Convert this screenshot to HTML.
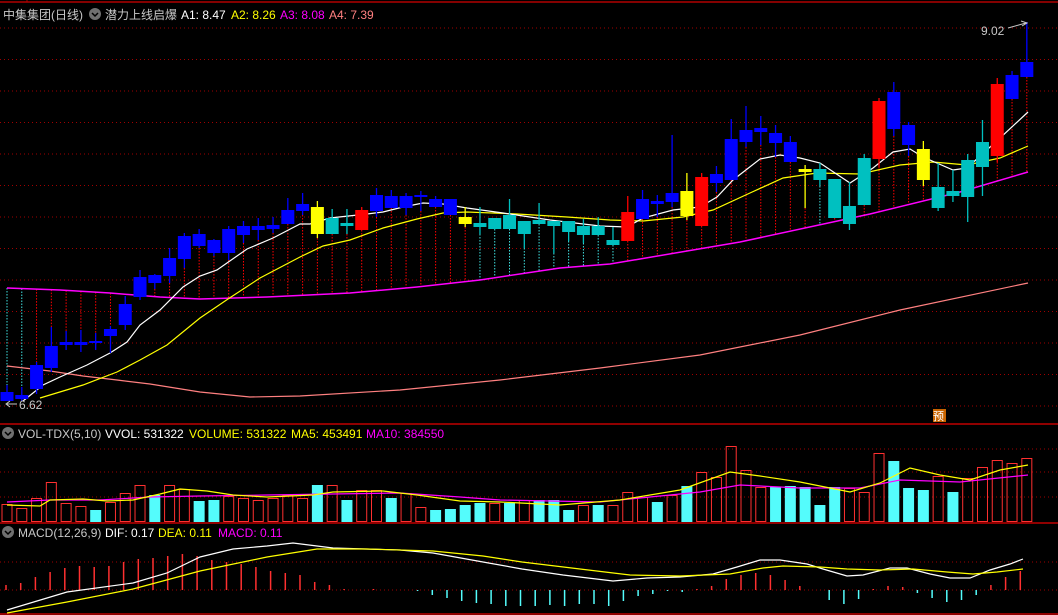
<!DOCTYPE html>
<html><head><meta charset="utf-8"><style>
html,body{margin:0;padding:0;background:#000;width:1058px;height:615px;overflow:hidden}
svg{display:block}
text{font-family:"Liberation Sans","Noto Sans CJK SC",sans-serif;font-size:12px}
</style></head><body>
<svg id="s" width="1058" height="615" viewBox="0 0 1058 615" xmlns="http://www.w3.org/2000/svg">
<rect width="1058" height="615" fill="#000"/>
<line x1="0" y1="2" x2="1058" y2="2" stroke="#b00000" stroke-width="1.5"/>
<line x1="27" y1="0" x2="27" y2="2" stroke="#b00000"/>
<g id="grid"></g>
<g id="main"></g>
<line x1="0" y1="424" x2="1058" y2="424" stroke="#c00000" stroke-width="1.5"/>
<line x1="0" y1="523" x2="1058" y2="523" stroke="#c00000" stroke-width="1.5"/>
<line x1="0" y1="614" x2="1058" y2="614" stroke="#c00000" stroke-width="1.5"/>
<g id="vol"></g>
<g id="macd"></g>
<circle cx="95" cy="14" r="6" fill="#707070"/><path d="M92 13 L95 16 L98 13" stroke="#000" stroke-width="1.5" fill="none"/>
<text x="3" y="19" fill="#c8c8c8">中集集团(日线)</text>
<text x="105" y="19" fill="#c8c8c8">潜力上线启爆</text>
<text x="181" y="19" fill="#ffffff">A1: 8.47</text>
<text x="231" y="19" fill="#ffff00">A2: 8.26</text>
<text x="280" y="19" fill="#ff00ff">A3: 8.08</text>
<text x="329" y="19" fill="#ff8080">A4: 7.39</text>
<circle cx="8" cy="433" r="6" fill="#707070"/><path d="M5 432 L8 435 L11 432" stroke="#000" stroke-width="1.5" fill="none"/>
<text x="18" y="438" fill="#c8c8c8">VOL-TDX(5,10)</text>
<text x="105" y="438" fill="#ffffff">VVOL: 531322</text>
<text x="189" y="438" fill="#ffff00">VOLUME: 531322</text>
<text x="291" y="438" fill="#ffff00">MA5: 453491</text>
<text x="366" y="438" fill="#ff00ff">MA10: 384550</text>
<circle cx="8" cy="532" r="6" fill="#707070"/><path d="M5 531 L8 534 L11 531" stroke="#000" stroke-width="1.5" fill="none"/>
<text x="18" y="537" fill="#c8c8c8">MACD(12,26,9)</text>
<text x="105" y="537" fill="#ffffff">DIF: 0.17</text>
<text x="158" y="537" fill="#ffff00">DEA: 0.11</text>
<text x="218" y="537" fill="#ff00ff">MACD: 0.11</text>
<text x="981" y="35" fill="#c8c8c8">9.02</text>
<path d="M1008 28 L1026 23 M1021 21 L1027 23 L1022 26" stroke="#c8c8c8" fill="none"/>
<path d="M7 404 L17 404 M10 401 L6 404 L10 407" stroke="#c8c8c8" fill="none"/>
<text x="19" y="409" fill="#c8c8c8">6.62</text>
<rect x="933" y="409" width="13" height="13" fill="#c86400"/>
<text x="933" y="420" fill="#ffffff" style="font-size:11px">预</text>
</svg>
<script>
var NS="http://www.w3.org/2000/svg";
function el(p,t,a){var e=document.createElementNS(NS,t);for(var k in a)e.setAttribute(k,a[k]);document.getElementById(p).appendChild(e);return e;}
function X(i){return 7+14.78*i;}
function poly(p,pts,c,w){el(p,"polyline",{points:pts.map(function(q){return q.join(",")}).join(" "),fill:"none",stroke:c,"stroke-width":w||1.2});}
function interp(pts,x){for(var i=0;i<pts.length-1;i++){if(x>=pts[i][0]&&x<=pts[i+1][0]){var t=(x-pts[i][0])/(pts[i+1][0]-pts[i][0]);return pts[i][1]+t*(pts[i+1][1]-pts[i][1]);}}return x<pts[0][0]?pts[0][1]:pts[pts.length-1][1];}
[28,59.5,91,122.5,154,185.5,217,248.5,280,311.5,343,374.5,406,449,472,497,562,590].forEach(function(y){el("grid","line",{x1:0,x2:1058,y1:y,y2:y,stroke:"#a00000","stroke-dasharray":"1 3"});});
var mag=[[7,288],[60,290],[110,293],[160,297],[200,299],[267,297],[350,293],[417,287],[480,280],[560,268],[610,264],[640,259],[740,242],[870,214],[960,192],[1028,172]];
var C={B:"#0000ff",R:"#ff0000",C:"#00c0c0",Y:"#ffff00"};
var cd=[[392,401,385,401,"B"],[395,399,387,401,"B"],[365,389,362,394,"B"],[346,368,327,372,"B"],[342,345,331,350,"B"],[342,345,330,352,"B"],[341,343,333,350,"B"],[329,336,326,353,"B"],[304,325,296,330,"B"],[277,297,270,300,"B"],[275,283,274,289,"B"],[258,276,248,283,"B"],[236,259,233,268,"B"],[234,246,229,248,"B"],[240,253,239,256,"B"],[229,253,226,260,"B"],[226,235,221,243,"B"],[226,230,218,240,"B"],[225,229,217,233,"B"],[210,224,198,224,"B"],[204,211,193,215,"B"],[207,234,201,238,"Y"],[218,234,209,234,"C"],[223,226,209,234,"C"],[210,230,207,230,"R"],[195,211,188,217,"B"],[196,208,190,208,"B"],[196,208,193,215,"B"],[195,197,191,211,"B"],[199,207,196,207,"B"],[199,215,199,215,"B"],[217,224,207,227,"Y"],[223,227,207,234,"C"],[218,229,218,229,"C"],[215,229,199,229,"C"],[221,234,221,248,"C"],[220,224,203,224,"C"],[221,226,221,253,"C"],[221,232,221,241,"C"],[226,235,219,243,"C"],[226,235,217,235,"C"],[240,245,227,245,"C"],[212,241,196,241,"R"],[199,219,190,219,"B"],[201,204,195,217,"B"],[193,202,135,207,"B"],[191,216,173,220,"Y"],[177,226,173,226,"R"],[174,183,166,192,"B"],[139,180,119,180,"B"],[130,142,106,147,"B"],[128,132,116,145,"B"],[133,143,125,157,"B"],[142,162,136,162,"B"],[169,172,165,208,"Y"],[169,180,163,186,"C"],[179,218,179,218,"C"],[206,224,182,230,"C"],[158,205,154,205,"C"],[101,159,98,167,"R"],[92,129,82,136,"B"],[125,145,122,156,"B"],[149,180,141,186,"Y"],[187,208,163,211,"C"],[191,196,170,202,"C"],[160,197,154,222,"C"],[142,167,120,196,"C"],[84,156,78,162,"R"],[75,99,71,99,"B"],[62,77,22,77,"B"]];
var cyanLines={0:1,1:1,32:1,33:1,34:1,35:1,36:1,37:1,38:1,39:1,40:1,41:1,55:1};
cd.forEach(function(c,i){var x=X(i),my=interp(mag,x),y1,y2;
if(my>c[3]+2){y1=c[3];y2=my;}else if(my<c[2]-2){y1=my;y2=c[2];}else return;
el("main","line",{x1:x,x2:x,y1:y1,y2:y2,stroke:cyanLines[i]?"#40e0e0":"#ff0000","stroke-dasharray":"1.5 1.5"});});
poly("main",[[7,366],[50,371],[83,376],[117,380],[150,384],[200,392],[250,397],[300,396],[400,390],[500,380],[600,368],[700,355],[800,335],[900,310],[1028,283]],"#ff8080");
poly("main",mag,"#ff00ff",1.5);
poly("main",[[40,398],[83,385],[117,372],[140,360],[167,345],[200,318],[228,299],[260,278],[300,257],[323,246],[350,240],[383,228],[417,219],[443,213],[467,212],[517,214],[567,217],[610,220],[643,221],[683,217],[713,210],[750,193],[783,178],[817,173],[860,174],[900,165],[933,162],[967,165],[1000,158],[1028,146]],"#ffff00");
poly("main",[[23,401],[43,385],[60,377],[87,365],[110,353],[127,342],[140,325],[160,310],[183,287],[200,276],[217,270],[247,249],[273,238],[300,224],[310,224],[330,218],[367,214],[383,212],[403,207],[423,203],[443,204],[467,208],[503,213],[550,220],[600,226],[627,227],[643,218],[673,210],[700,207],[717,197],[733,180],[760,159],[780,155],[800,158],[820,163],[850,183],[873,168],[893,152],[910,149],[923,157],[953,170],[967,168],[1000,138],[1028,112]],"#ffffff");
cd.forEach(function(c,i){var x=X(i),col=C[c[4]];
el("main","line",{x1:x,x2:x,y1:c[2],y2:c[3],stroke:col,"stroke-width":1.3});
el("main","rect",{x:x-6.5,y:c[0],width:13,height:Math.max(c[1]-c[0],2),fill:col});});
var vb=[[504,"H"],[508,"H"],[498,"H"],[482,"H"],[503,"H"],[506,"H"],[510,"C"],[502,"H"],[493,"H"],[485,"H"],[495,"C"],[485,"H"],[489,"H"],[501,"C"],[500,"C"],[496,"H"],[498,"H"],[500,"H"],[498,"H"],[495,"H"],[498,"H"],[485,"C"],[485,"H"],[500,"C"],[490,"H"],[490,"H"],[498,"C"],[493,"H"],[507,"H"],[510,"C"],[509,"C"],[505,"C"],[503,"C"],[503,"H"],[503,"C"],[500,"H"],[500,"C"],[500,"C"],[510,"C"],[505,"H"],[505,"C"],[505,"H"],[492,"H"],[497,"H"],[502,"C"],[495,"H"],[486,"C"],[472,"H"],[477,"H"],[446,"H"],[470,"H"],[487,"H"],[487,"C"],[486,"C"],[487,"C"],[505,"C"],[487,"C"],[488,"H"],[492,"H"],[453,"H"],[461,"C"],[488,"C"],[490,"C"],[476,"H"],[492,"C"],[478,"H"],[467,"H"],[460,"H"],[463,"H"],[458,"H"]];
vb.forEach(function(v,i){var x=X(i);if(v[1]=="C")el("vol","rect",{x:x-5.5,y:v[0],width:11,height:522-v[0],fill:"#54fcfc"});else el("vol","rect",{x:x-5,y:v[0]+0.5,width:10,height:521-v[0],fill:"none",stroke:"#ff3030","stroke-width":1});});
poly("vol",[[7,502],[50,500],[100,500],[150,497],[200,496],[267,495],[333,494],[400,493],[460,497],[500,500],[600,502],[700,492],[740,485],[800,488],[860,488],[900,480],[960,482],[1028,475]],"#ff00ff");
poly("vol",[[7,505],[40,506],[50,500],[83,499],[107,501],[133,500],[160,494],[180,489],[207,491],[233,495],[267,497],[313,495],[333,492],[383,491],[417,495],[460,501],[500,502],[560,505],[620,500],[680,490],[730,472],[760,476],[800,482],[850,492],[880,483],[910,468],[940,475],[970,480],[1000,470],[1028,465]],"#ffff00");
var mv=[585,583,577,572,568,566,567,566,562,559,558,556,554,556,560,562,564,567,571,573,575,582,585,589,590,589,590,590,591,595,598,601,603,604,606,606,606,605,606,604,604,606,601,596,594,591,592,589,586,579,575,573,575,580,586,590,600,604,599,589,586,587,593,598,602,600,595,585,577,571];
mv.forEach(function(y,i){if(Math.abs(y-590)<0.5)return;var x=6+14.7*i;el("macd","line",{x1:x,x2:x,y1:590,y2:y,stroke:y<590?"#ff3030":"#54fcfc","stroke-width":1.5});});
poly("macd",[[7,610],[67,592],[133,583],[167,573],[200,557],[233,549],[267,546],[293,543],[333,548],[400,550],[433,553],[483,562],[522,569],[563,575],[613,581],[647,578],[680,577],[713,574],[737,567],[760,560],[780,560],[807,564],[823,569],[847,576],[863,575],[890,568],[907,568],[930,574],[950,578],[970,578],[990,570],[1010,564],[1023,559]],"#ffffff");
poly("macd",[[7,613],[67,602],[133,589],[200,571],[267,557],[317,549],[367,549],[433,551],[483,556],[522,562],[580,569],[630,575],[680,576],[730,574],[763,568],[783,566],[820,567],[847,569],[880,570],[913,569],[947,572],[973,574],[997,572],[1023,569]],"#ffff00");
</script>
</body></html>
